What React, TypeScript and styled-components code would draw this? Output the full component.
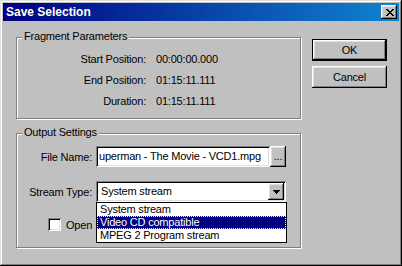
import styled, { createGlobalStyle, css } from "styled-components";

const GlobalStyle = createGlobalStyle`
  html, body {
    margin: 0;
    padding: 0;
    background: #c0c0c0;
  }
  body {
    font-family: "Liberation Sans", Arial, sans-serif;
    font-size: 11px;
    letter-spacing: -0.2px;
    color: #000;
  }
`;

// classic 3d edges
const raised = css`
  background: #c0c0c0;
  box-shadow: inset -1px -1px #000, inset 1px 1px #fff, inset -2px -2px #808080,
    inset 2px 2px #dfdfdf;
`;
const sunken = css`
  background: #fff;
  box-shadow: inset 1px 1px #808080, inset -1px -1px #fff, inset 2px 2px #000,
    inset -2px -2px #dfdfdf;
`;

const Window = styled.div`
  width: 402px;
  height: 266px;
  box-sizing: border-box;
  padding: 3px;
  background: #c0c0c0;
  box-shadow: inset -1px -1px #000, inset 1px 1px #dfdfdf, inset -2px -2px #808080,
    inset 2px 2px #fff;
  display: flex;
  flex-direction: column;
`;

const TitleBar = styled.div`
  height: 18px;
  display: flex;
  align-items: center;
  justify-content: space-between;
  padding: 0 2px 0 3px;
  background: linear-gradient(to right, #000080, #1084d0);
`;

const Title = styled.span`
  color: #fff;
  font-weight: bold;
  font-size: 12px;
  letter-spacing: 0;
`;

const CloseButton = styled.div`
  width: 16px;
  height: 14px;
  box-sizing: border-box;
  display: flex;
  align-items: center;
  justify-content: center;
  padding-left: 1px;
  ${raised};
`;

const Body = styled.div`
  display: flex;
  padding: 16px 0 0 13px;
`;

const LeftColumn = styled.div`
  width: 285px;
  display: flex;
  flex-direction: column;
  gap: 14px;
`;

const RightColumn = styled.div`
  display: flex;
  flex-direction: column;
  gap: 5px;
  margin-left: 11px;
  padding-top: 2px;
`;

const GroupBox = styled.div<{ $height: number }>`
  position: relative;
  box-sizing: border-box;
  height: ${(p) => p.$height}px;
  border: 1px solid #808080;
  box-shadow: inset 1px 1px #fff, 1px 1px 0 #fff;
`;

const Caption = styled.span`
  position: absolute;
  top: -8px;
  left: 5px;
  padding: 0 2px;
  line-height: 13px;
  background: #c0c0c0;
  white-space: nowrap;
`;

const InfoGrid = styled.div`
  display: grid;
  grid-template-columns: 129px auto;
  grid-auto-rows: 21px;
  column-gap: 10px;
  padding-top: 10px;
  align-items: center;
`;

const Label = styled.span`
  text-align: right;
  white-space: nowrap;
`;

const Value = styled.span`
  white-space: nowrap;
`;

const FormGrid = styled.div`
  display: grid;
  grid-template-columns: 75px 190px;
  grid-auto-rows: 21px;
  column-gap: 4px;
  row-gap: 14px;
  padding-top: 12px;
  align-items: center;
`;

const FieldRow = styled.div`
  display: flex;
  height: 21px;
`;

const TextBox = styled.div`
  width: 174px;
  height: 21px;
  box-sizing: border-box;
  padding: 0 3px;
  line-height: 21px;
  overflow: hidden;
  white-space: nowrap;
  ${sunken};
`;

const BrowseButton = styled.div`
  width: 16px;
  height: 21px;
  box-sizing: border-box;
  display: flex;
  align-items: center;
  justify-content: center;
  padding-bottom: 2px;
  ${raised};
`;

const Combo = styled.div`
  position: relative;
  height: 21px;
  box-sizing: border-box;
  padding: 2px;
  display: flex;
  ${sunken};
`;

const ComboText = styled.div`
  flex: 1;
  padding-left: 3px;
  line-height: 17px;
  white-space: nowrap;
`;

const ArrowButton = styled.div`
  width: 16px;
  height: 17px;
  box-sizing: border-box;
  display: flex;
  align-items: center;
  justify-content: center;
  ${raised};
`;

const DropList = styled.div`
  position: absolute;
  top: 100%;
  left: 0;
  width: 191px;
  box-sizing: border-box;
  border: 1px solid #000;
  background: #fff;
  z-index: 2;
`;

const ListItem = styled.div<{ $selected?: boolean }>`
  height: 13px;
  box-sizing: border-box;
  padding-left: 2px;
  line-height: 11px;
  white-space: nowrap;
  border: 1px ${(p) => (p.$selected ? "dotted #ffff7f" : "solid transparent")};
  background: ${(p) => (p.$selected ? "#000080" : "#fff")};
  color: ${(p) => (p.$selected ? "#fff" : "#000")};
`;

const CheckRow = styled.div`
  display: flex;
  align-items: center;
  gap: 5px;
  height: 13px;
  margin-top: 16px;
  padding-left: 31px;
  white-space: nowrap;
`;

const CheckBox = styled.div`
  width: 13px;
  height: 13px;
  box-sizing: border-box;
  ${sunken};
`;

const PushButton = styled.div<{ $default?: boolean }>`
  width: 75px;
  height: 22px;
  box-sizing: border-box;
  display: flex;
  align-items: center;
  justify-content: center;
  ${raised};
  ${(p) =>
    p.$default &&
    css`
      border: 1px solid #000;
    `}
`;

const CloseGlyph = () => (
  <svg width="8" height="7" viewBox="0 0 8 7" shapeRendering="crispEdges">
    <path
      d="M0 0h2v1H0zM6 0h2v1H6zM1 1h2v1H1zM5 1h2v1H5zM2 2h4v1H2zM3 3h2v1H3zM2 4h4v1H2zM1 5h2v1H1zM5 5h2v1H5zM0 6h2v1H0zM6 6h2v1H6z"
      fill="#000"
    />
  </svg>
);

const DownArrow = () => (
  <svg width="7" height="4" viewBox="0 0 7 4" shapeRendering="crispEdges">
    <path d="M0 0h7v1H0zM1 1h5v1H1zM2 2h3v1H2zM3 3h1v1H3z" fill="#000" />
  </svg>
);

const streamTypes = ["System stream", "Video CD compatible", "MPEG 2 Program stream"];

const App = () => {
  return (
    <>
      <GlobalStyle />
      <Window>
        <TitleBar>
          <Title>Save Selection</Title>
          <CloseButton>
            <CloseGlyph />
          </CloseButton>
        </TitleBar>
        <Body>
          <LeftColumn>
            <GroupBox $height={82}>
              <Caption>Fragment Parameters</Caption>
              <InfoGrid>
                <Label>Start Position:</Label>
                <Value>00:00:00.000</Value>
                <Label>End Position:</Label>
                <Value>01:15:11.111</Value>
                <Label>Duration:</Label>
                <Value>01:15:11.111</Value>
              </InfoGrid>
            </GroupBox>

            <GroupBox $height={115}>
              <Caption>Output Settings</Caption>
              <FormGrid>
                <Label>File Name:</Label>
                <FieldRow>
                  <TextBox>uperman - The Movie - VCD1.mpg</TextBox>
                  <BrowseButton>...</BrowseButton>
                </FieldRow>
                <Label>Stream Type:</Label>
                <Combo>
                  <ComboText>System stream</ComboText>
                  <ArrowButton>
                    <DownArrow />
                  </ArrowButton>
                  <DropList>
                    {streamTypes.map((t, i) => (
                      <ListItem key={t} $selected={i === 1}>
                        {t}
                      </ListItem>
                    ))}
                  </DropList>
                </Combo>
              </FormGrid>
              <CheckRow>
                <CheckBox />
                <span>Open</span>
              </CheckRow>
            </GroupBox>
          </LeftColumn>

          <RightColumn>
            <PushButton $default>OK</PushButton>
            <PushButton>Cancel</PushButton>
          </RightColumn>
        </Body>
      </Window>
    </>
  );
};

export default App;
